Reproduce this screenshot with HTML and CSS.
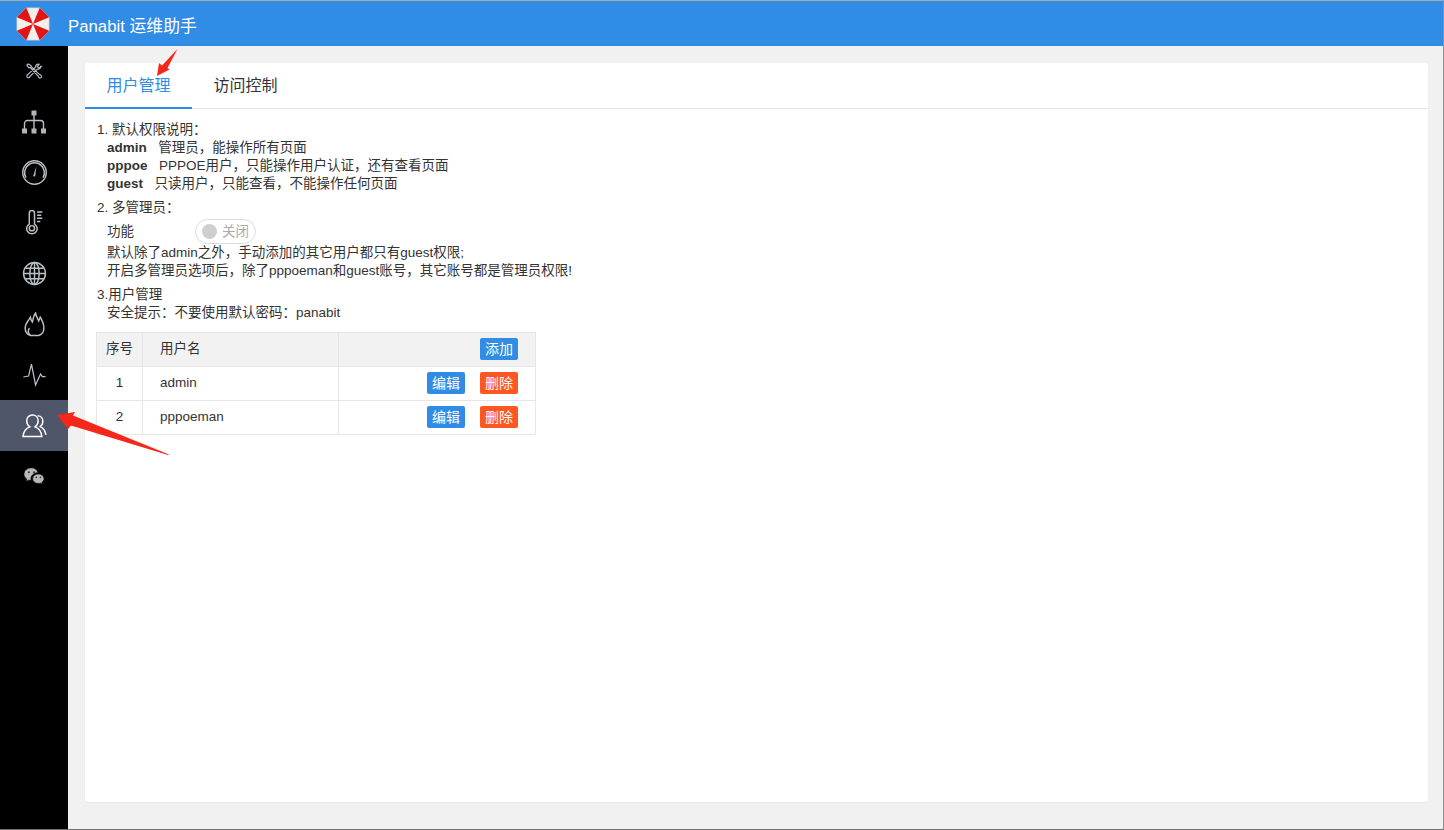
FILE: index.html
```html
<!DOCTYPE html>
<html lang="zh">
<head>
<meta charset="utf-8">
<title>Panabit 运维助手</title>
<link rel="stylesheet" href="styles.css">
</head>
<body>
<div class="app">
  <header class="topbar">
    <svg class="logo" viewBox="0 0 36 36" width="36" height="36">
      <path fill="#f3efed" stroke="#b9b4b6" stroke-width=".6" d="M11.300 1.800H24.700L34.200 11.300V24.700L24.700 34.200H11.300L1.800 24.700V11.300Z"/>
      <path fill="#e31414" d="M18 18 11.300 1.800 1.800 11.300Z M18 18 24.700 1.800 34.200 11.300Z M18 18 34.200 24.700 24.700 34.200Z M18 18 11.300 34.200 1.800 24.700Z"/>
    </svg>
    <div class="brand">Panabit 运维助手</div>
  </header>
  <div class="main">
    <nav class="sidebar">
      <a class="nav-item"><svg viewBox="0 0 24 24" class="ico tools"><path d="M5 3.500 3.500 5l2 3h2l9.500 10c.5 2.500 2.500 3 3.500 1.800 1.200-1 .5-3-1.800-3.500L8.500 6.500v-1zM20.500 6.500l-2.500 2-2-2 2.200-2.600c-2-.8-4.500 .5-4.200 3.300l-9 8.800c-1.500 .5-2 2-1.300 3.200 1 1.300 3 1 3.600-.8l8.600-8.700c2.800 .4 4.800-1.500 4.100-3.200z"/></svg></a>
      <a class="nav-item"><svg viewBox="0 0 24 24" class="ico tree"><path d="M12 4v15M2.500 19v-5.500a3 3 0 0 1 3-3h13a3 3 0 0 1 3 3V19"/><path class="fill" d="M9.500 .5h5v5h-5zM0 18.500h5v5H0zM9.500 18.500h5v5h-5zM19 18.500h5v5h-5z"/></svg></a>
      <a class="nav-item"><svg viewBox="0 0 24 24" class="ico big"><circle cx="12" cy="12" r="11.300"/><path d="M3.800 17A9.500 9.500 0 1 1 20.200 17"/><path class="fill" d="M13.800 6 12.800 15a1 1 0 0 1-2-.1z"/></svg></a>
      <a class="nav-item"><svg viewBox="0 0 24 24" class="ico big"><path d="M7 3a2.500 2.500 0 0 1 5 0v10.500a5 5 0 1 1-5 0z"/><circle cx="9.500" cy="17.500" r="2.500"/><path d="M14.500 2h5M14.500 5h4M14.500 8h5M14.500 11h3"/></svg></a>
      <a class="nav-item"><svg viewBox="0 0 24 24" class="ico big"><circle cx="12" cy="12" r="10.500"/><ellipse cx="12" cy="12" rx="4.500" ry="10.500"/><path d="M12 1.500v21M1.500 12h21M3.500 7h17M3.500 17h17"/></svg></a>
      <a class="nav-item"><svg viewBox="0 0 24 24" class="ico big"><path d="M8 22.500C4 21 3 18 3 15 3 11 6 9 8 5c.5 2 1 3.500 2 4.500C10.500 6 11.500 3 13 1c.5 3 2 5 3 7.500.5-1 1-2 1.500-3.500C20 9 21 12 21 15.500c0 3.500-2 6-5 7z"/><path d="M8 22.500c-2-2-2.500-4.500-1-7"/></svg></a>
      <a class="nav-item"><svg viewBox="0 0 24 24" class="ico big thin"><path d="M1.400 14.400 6.300 13.500 9.100 2 13 22 17.800 11.500 19.500 14H22.600"/></svg></a>
      <a class="nav-item active"><svg viewBox="0 0 24 24" class="ico big"><path d="M10 2c3.500 0 5.500 2.700 5.500 5.500 0 2.500-1 4.500-3 5.800 3.500 1.200 6 4.200 6.500 9.200H1c.5-5 3-8 6.500-9.200-2-1.300-3-3.300-3-5.800C4.500 4.700 6.500 2 10 2z"/><path d="M15 2.500c3.500 .5 5 3 5 5.500 0 2-1 4-2.500 5 3 1.500 5 4.500 5.500 8"/></svg></a>
      <a class="nav-item"><svg viewBox="0 0 24 24" class="ico wechat"><path d="M9.500 3C4.500 3 1 6.200 1 10c0 2.200 1.200 4 3 5.300L3.300 18l3-1.500c1 .3 1.700 .4 2.700 .5-.2-.7-.3-1.300-.3-2 0-3.700 3.400-6.500 7.800-6.500C15.500 5.300 13 3 9.500 3z"/><path d="M23 15c0-3-2.900-5.200-6.300-5.200S10.500 12 10.500 15s2.800 5.200 6.200 5.200c.8 0 1.500-.1 2.200-.4l2.400 1.300-.6-2.200c1.400-1 2.300-2.300 2.300-3.900z"/><circle class="eye" cx="6.500" cy="8" r="1.100"/><circle class="eye" cx="12" cy="8" r="1.100"/><circle class="eye" cx="14.500" cy="13.500" r=".9"/><circle class="eye" cx="19" cy="13.500" r=".9"/></svg></a>
    </nav>
    <main class="content">
      <section class="card">
        <div class="tabs">
          <div class="tab current">用户管理</div>
          <div class="tab">访问控制</div>
        </div>
        <div class="body">
          <div class="block">
            <div class="line">1. 默认权限说明：</div>
            <div class="line indent"><b class="role">admin</b>管理员，能操作所有页面</div>
            <div class="line indent"><b class="role">pppoe</b>PPPOE用户，只能操作用户认证，还有查看页面</div>
            <div class="line indent"><b class="role">guest</b>只读用户，只能查看，不能操作任何页面</div>
          </div>
          <div class="block">
            <div class="line">2. 多管理员：</div>
            <div class="switch-row indent">
              <span class="switch-label">功能</span>
              <span class="switch"><i class="knob"></i>关闭</span>
            </div>
            <div class="line indent">默认除了admin之外，手动添加的其它用户都只有guest权限;</div>
            <div class="line indent">开启多管理员选项后，除了pppoeman和guest账号，其它账号都是管理员权限!</div>
          </div>
          <div class="block">
            <div class="line">3.用户管理</div>
            <div class="line indent">安全提示：不要使用默认密码：panabit</div>
          </div>
          <table class="users">
            <thead>
              <tr><th class="c-no">序号</th><th class="c-name">用户名</th><th class="c-act"><button class="btn blue">添加</button></th></tr>
            </thead>
            <tbody>
              <tr><td class="c-no">1</td><td class="c-name">admin</td><td class="c-act"><button class="btn blue">编辑</button><button class="btn orange">删除</button></td></tr>
              <tr><td class="c-no">2</td><td class="c-name">pppoeman</td><td class="c-act"><button class="btn blue">编辑</button><button class="btn orange">删除</button></td></tr>
            </tbody>
          </table>
        </div>
      </section>
    </main>
  </div>
  <svg class="arrow arrow-tab" viewBox="0 0 30 50" width="30" height="50"><path d="M25.500 2 15.500 21 17.500 22.500 5 29 7 16 10 18.500Z" fill="#f5261a"/></svg>
  <svg class="arrow arrow-nav" viewBox="0 0 120 60" width="120" height="60"><path d="M0 6 18 3 16 6.500 112 45.500 111 46 14 16.500 11 20Z" fill="#f5261a"/></svg>
</div>
</body>
</html>
```
FILE: styles.css
```css
* { box-sizing: border-box; }
html, body { margin: 0; height: 100%; }
body {
  font-family: "Liberation Sans", "Noto Sans CJK SC", sans-serif;
  font-size: 13.5px;
  line-height: 18px;
  color: #333;
  background: #f1f1f1;
  overflow: hidden;
}
.app {
  position: relative;
  display: flex;
  flex-direction: column;
  height: 830px;
  width: 1444px;
  border-top: 1px solid #a9a9a9;
  border-bottom: 1px solid #6f6f6f;
  border-right: 1px solid #8f8f8f;
}
.topbar {
  display: flex;
  align-items: center;
  flex: 0 0 45px;
  padding-left: 15px;
  background: #318ce5;
  color: #fff;
}
.logo { display: block; flex: none; margin-top: 1px; }
.brand { margin-left: 17px; padding-top: 7px; font-size: 16.8px; }
.main { display: flex; flex: 1; min-height: 0; }
.sidebar { flex: 0 0 68px; background: #000; display: flex; flex-direction: column; }
.nav-item {
  height: 50.57px;
  flex: none;
  display: flex;
  align-items: center;
  justify-content: center;
}
.nav-item.active { background: #50566a; }
.ico {
  width: 24px;
  height: 24px;
  fill: none;
  stroke: #b9c1c8;
  stroke-width: 1.4;
}
.ico .fill { fill: #b4b4b4; stroke: none; }
.ico.tools { width: 20px; height: 20px; }
.ico.big { width: 25px; height: 25px; }
.ico.thin { stroke-width: 1.2; }
.ico.wechat { fill: #b8b8b8; stroke: #000; stroke-width: .8; width: 22px; height: 22px; }
.ico .eye { fill: #333; stroke: none; }
.active .ico { stroke: #fff; }
.content { flex: 1; padding: 17px 15px 27px 17px; min-width: 0; }
.card {
  height: 100%;
  background: #fff;
  border-radius: 3px;
  box-shadow: 0 1px 2px rgba(0, 0, 0, .04);
}
.tabs { display: flex; height: 46px; border-bottom: 1px solid #e6e6e6; }
.tab {
  width: 107px;
  height: 46px;
  line-height: 46px;
  text-align: center;
  font-size: 16px;
  border-bottom: 2px solid transparent;
}
.tab.current { color: #318ce5; border-bottom-color: #318ce5; }
.body { padding: 12px 0 0 12px; }
.block { margin-bottom: 6px; }
.line { height: 18px; white-space: nowrap; }
.indent { padding-left: 10px; }
.role { font-weight: 700; margin-right: 11.5px; line-height: 18px; }
.switch-row { display: flex; align-items: flex-end; height: 27px; }
.switch-label { width: 88px; padding-bottom: 3px; }
.switch {
  display: inline-flex;
  align-items: center;
  height: 25px;
  width: 61px;
  padding-left: 6px;
  border: 1px solid #ddd;
  border-radius: 13px;
  color: #aaa;
}
.knob { width: 15px; height: 15px; border-radius: 50%; background: #cfcfcf; margin-right: 5px; }
.users {
  margin: 10px 0 0 -1px;
  border-collapse: collapse;
  width: 440px;
  table-layout: fixed;
}
.users th, .users td {
  border: 1px solid #e6e6e6;
  height: 34px;
  padding: 0;
  font-weight: 400;
  vertical-align: middle;
}
.users th { background: #f2f2f2; }
.c-no { width: 46px; text-align: center; }
.users .c-name { width: 196px; text-align: left; padding-left: 17px; padding-bottom: 2px; }
.users .c-no { padding-bottom: 2px; }
.users .c-act { text-align: right; padding-right: 17px; padding-bottom: 2px; }
.btn {
  display: inline-block;
  vertical-align: middle;
  width: 38px;
  height: 22px;
  padding: 0;
  margin-left: 15px;
  border: 0;
  border-radius: 2px;
  color: #fff;
  font: inherit;
  font-size: 14px;
  line-height: 22px;
}
.btn.blue { background: #318ce5; }
.btn.orange { background: #ff5722; }
.arrow { position: absolute; }
.arrow-tab { left: 152px; top: 46px; }
.arrow-nav { left: 57px; top: 408px; }
```
